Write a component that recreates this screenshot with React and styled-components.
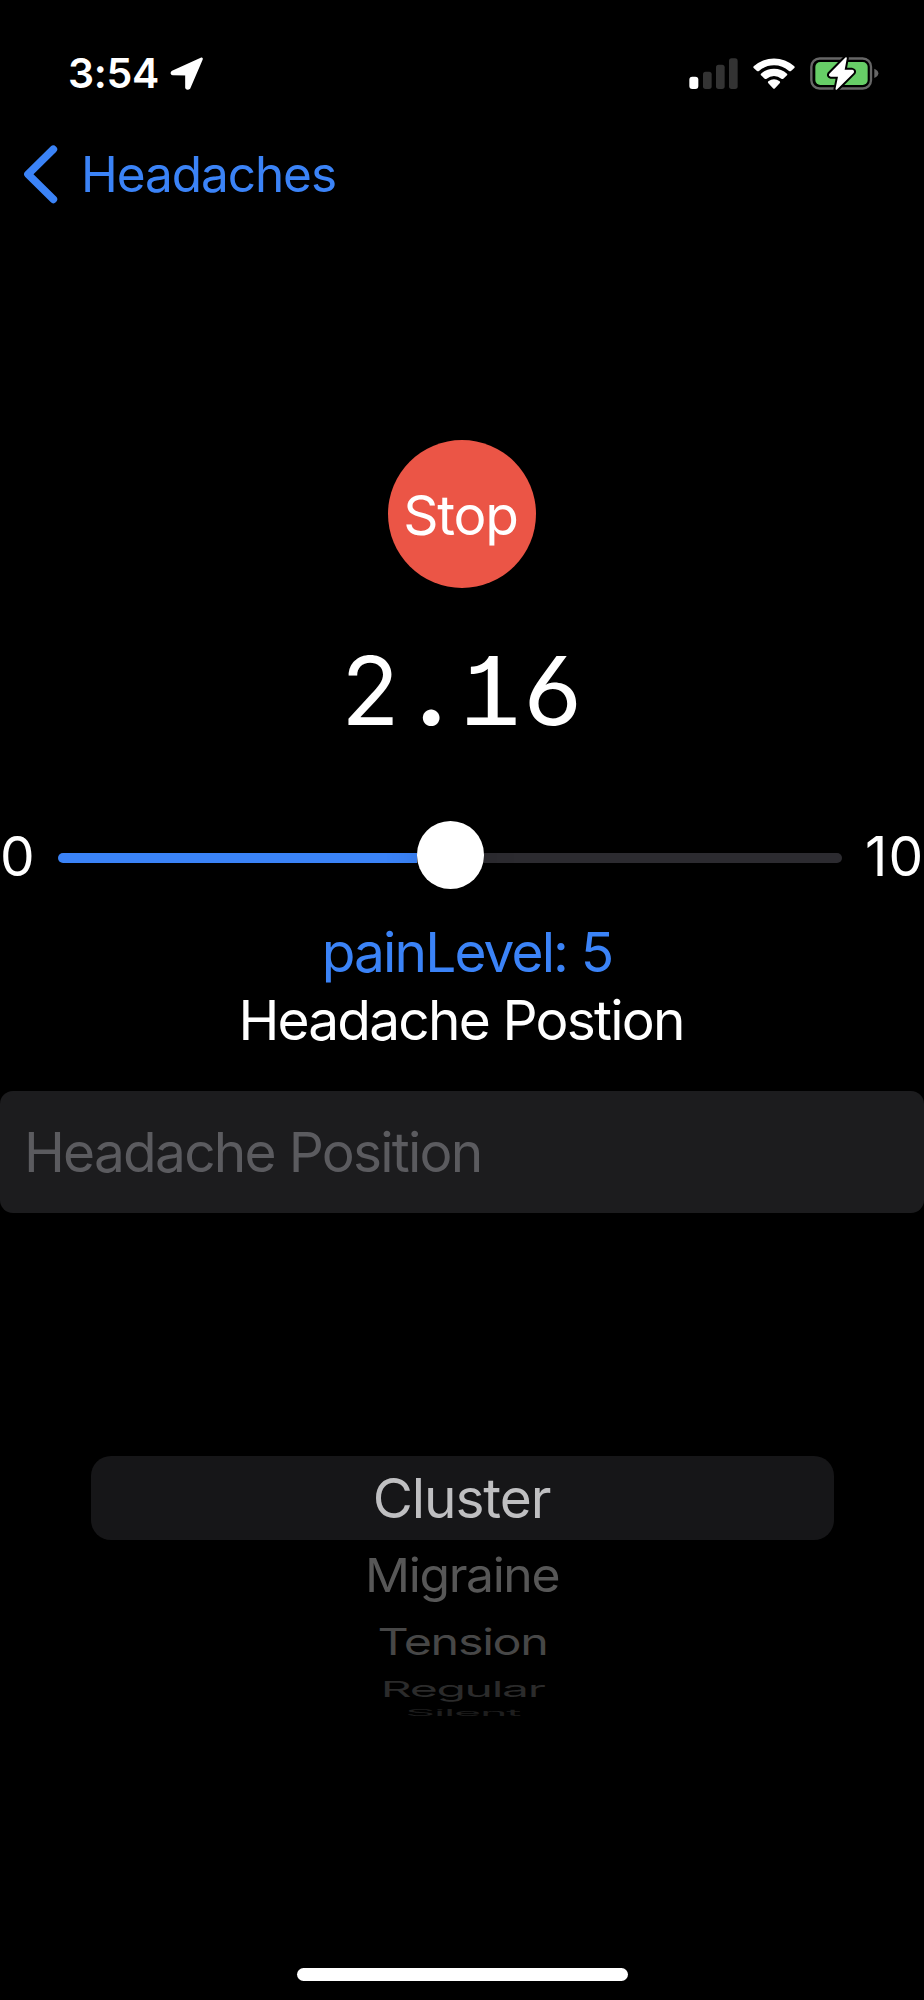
import React from "react";
import styled, { createGlobalStyle } from "styled-components";

const GlobalStyle = createGlobalStyle`
  * { box-sizing: border-box; }
  body {
    margin: 0;
    background: #000;
    color: #fff;
    font-family: Inter, "Liberation Sans", sans-serif;
  }
`;

const Screen = styled.main`
  width: 924px;
  height: 2000px;
  display: flex;
  flex-direction: column;
  overflow: hidden;
  background: #000;
`;

const StatusBar = styled.header`
  height: 146px;
  padding: 0 45px 0 68px;
  display: flex;
  align-items: center;
`;

const Clock = styled.time`
  width: 102px;
  font-size: 41px;
  font-weight: 600;
  letter-spacing: -0.3px;
`;

const StatusIcons = styled.div`
  margin-left: auto;
  display: flex;
  align-items: center;
  gap: 14px;
`;

const Glyph = styled.svg`
  display: block;
  flex: none;
  width: ${(p) => p.$width}px;
  height: ${(p) => p.$height}px;
`;

const NavBar = styled.nav`
  height: 56px;
  padding-left: 22px;
  display: flex;
  align-items: center;
`;

const BackLink = styled.a`
  display: flex;
  align-items: center;
  gap: 21px;
  color: #3b83f7;
  font-size: 49.5px;
  line-height: 56px;
  letter-spacing: -1.07px;
`;

const StopButton = styled.button`
  width: 148px;
  height: 148px;
  margin: 238px auto 0;
  padding: 2px 3px 0 0;
  border: 0;
  border-radius: 50%;
  display: flex;
  align-items: center;
  justify-content: center;
  background: #eb5546;
  color: #fff;
  font: 400 55px/60px Inter, "Liberation Sans", sans-serif;
  letter-spacing: -1.24px;
`;

const Timer = styled.div`
  height: 204px;
  padding-top: 1px;
  display: flex;
  justify-content: center;
  align-items: center;
  font-size: 95px;
  line-height: 120px;
  font-feature-settings: "cv01", "cv03", "ss01", "tnum";
`;

const TimerCell = styled.span`
  width: 61px;
  padding-right: ${(p) => p.$nudge || 0}px;
  display: flex;
  justify-content: center;
  transform: scaleX(${(p) => p.$stretch || 1});
`;

const TimerPoint = styled(TimerCell)`
  font-size: 126px;
  padding-bottom: 24px;
`;

const SliderRow = styled.div`
  height: 128px;
  display: flex;
  align-items: center;
  font-size: 55px;
  line-height: 60px;
`;

const MinLabel = styled.span`
  width: 57.5px;
`;

const MaxLabel = styled.span`
  width: 82px;
  padding-left: 23px;
  letter-spacing: 1.2px;
`;

const Slider = styled.div`
  flex: 1;
  display: flex;
  align-items: center;
`;

const Track = styled.div`
  flex: ${(p) => (p.$filled ? "0 0 359px" : "1")};
  height: 10px;
  margin-top: 3px;
  border-radius: ${(p) => (p.$filled ? "5px 0 0 5px" : "0 5px 5px 0")};
  background: ${(p) => (p.$filled ? "#3b83f7" : "#2c2b30")};
`;

const Thumb = styled.div`
  flex: none;
  width: 67.5px;
  height: 67.5px;
  margin: -2px 0 0;
  border-radius: 50%;
  background: #fff;
  box-shadow: 0 1px 36px rgba(0, 0, 0, 0.14);
  z-index: 1;
`;

const Caption = styled.p`
  height: 68px;
  margin: 0;
  padding-right: 2px;
  font-size: 55px;
  line-height: 69px;
  text-align: center;
  letter-spacing: -1.8px;
  white-space: nowrap;
`;

const PainCaption = styled(Caption)`
  padding: 0 0 0 10px;
  margin-top: -2px;
  color: #3b83f7;
  letter-spacing: -1.87px;
`;

const PositionField = styled.div`
  height: 122px;
  margin-top: 37px;
  padding-left: 24px;
  border-radius: 13px;
  background: #1c1c1e;
  color: #5b5b5f;
  font-size: 55px;
  line-height: 123px;
  letter-spacing: -1.75px;
  white-space: nowrap;
`;

const Picker = styled.div`
  width: 743px;
  margin: 243px 0 0 91px;
  display: flex;
  flex-direction: column;
  text-align: center;
  font-size: 55px;
  letter-spacing: -1.1px;
`;

const SelectedOption = styled.div`
  height: 84px;
  padding-right: 2px;
  border-radius: 20px;
  background: #161618;
  color: #bfbfc1;
  line-height: 85px;
`;

const Option = styled.div`
  height: ${(p) => p.$height}px;
  padding-top: ${(p) => p.$drop || 0}px;
  display: flex;
  align-items: center;
  justify-content: center;
  overflow: hidden;
  color: ${(p) => p.$color};
  letter-spacing: -1.5px;
  line-height: 71px;

  span {
    flex: none;
    transform: scale(${(p) => p.$scaleX}, ${(p) => p.$scaleY});
  }
`;

const HomeIndicator = styled.div`
  width: 331px;
  height: 13px;
  margin: auto auto 19.5px 297px;
  border-radius: 7px;
  background: #fff;
`;

const LocationIcon = () => (
  <Glyph $width={34} $height={35} viewBox="510 48 102 105">
    <path
      d="M604 57 L518 96 Q514 100 519 101 L560 102 L560 143 Q563 147 567 143 Z"
      fill="#fff" stroke="#fff" strokeWidth="9" strokeLinejoin="round"
    />
  </Glyph>
);

const SignalIcon = () => (
  <Glyph $width={49} $height={33} viewBox="87 49 147 99">
    <rect x="88" y="108" width="27" height="37" rx="9" fill="#fff" />
    <rect x="129" y="93" width="26" height="52" rx="8" fill="#333" />
    <rect x="168" y="72" width="26" height="73" rx="8" fill="#333" />
    <rect x="207" y="53" width="26" height="92" rx="8" fill="#333" />
  </Glyph>
);

const WifiIcon = () => (
  <Glyph $width={44} $height={33} viewBox="276 49 132 99">
    <g fill="#fff">
      <path d="M281 77 A90 90 0 0 1 403 77 Q405 80 403 82 L393 91 Q390 93 387 91 A68 68 0 0 0 297 91 Q294 93 291 91 L281 82 Q279 80 281 77 Z" />
      <path d="M303 99 A58 58 0 0 1 381 99 Q383 102 381 104 L370 114 Q367 116 364 114 A35 35 0 0 0 320 114 Q317 116 314 114 L303 104 Q301 102 303 99 Z" />
      <path d="M325 122 A28 28 0 0 1 359 122 Q362 125 359 128 L345 143 Q342 146 339 143 L325 128 Q322 125 325 122 Z" />
    </g>
  </Glyph>
);

const BatteryIcon = () => (
  <Glyph $width={69} $height={35} viewBox="450 46 207 105">
    <rect x="454" y="53.5" width="179" height="90" rx="25" fill="none" stroke="#666" strokeWidth="7" />
    <rect x="466" y="64" width="157" height="69" rx="15" fill="#67ce67" />
    <path d="M643 84 Q655 89 655 98 Q655 107 643 112 Z" fill="#666" />
    <path
      d="M558 52 L510 101 Q508 105 513 106 L537 106 L529 145 L579 95 Q581 91 576 90 L551 90 Z"
      fill="#fff" stroke="#000" strokeWidth="17" strokeLinejoin="round"
    />
    <path
      d="M558 52 L510 101 Q508 105 513 106 L537 106 L529 145 L579 95 Q581 91 576 90 L551 90 Z"
      fill="#fff" stroke="#fff" strokeWidth="5" strokeLinejoin="round"
    />
  </Glyph>
);

const BackChevron = () => (
  <Glyph $width={38} $height={60} viewBox="66 312 114 180">
    <path d="M160 328 L84 403 L160 478" fill="none" stroke="#3b83f7" strokeWidth="23" strokeLinecap="round" strokeLinejoin="round" />
  </Glyph>
);

const options = [
  { label: "Migraine", height: 70, color: "#575757", scaleX: 0.906, scaleY: 0.85 },
  { label: "Tension", height: 63, color: "#474747", scaleX: 0.881, scaleY: 0.66, drop: 1 },
  { label: "Regular", height: 32, color: "#2b2b2b", scaleX: 0.875, scaleY: 0.4 },
  { label: "Silent", height: 11, color: "#1e1e1e", scaleX: 0.85, scaleY: 0.16, drop: 4 },
];

export default function App() {
  return (
    <Screen>
      <GlobalStyle />
      <StatusBar>
        <Clock>3:54</Clock>
        <LocationIcon />
        <StatusIcons>
          <SignalIcon />
          <WifiIcon />
          <BatteryIcon />
        </StatusIcons>
      </StatusBar>
      <NavBar>
        <BackLink>
          <BackChevron />
          Headaches
        </BackLink>
      </NavBar>
      <StopButton>Stop</StopButton>
      <Timer>
        <TimerCell>2</TimerCell>
        <TimerPoint $nudge={1}>.</TimerPoint>
        <TimerCell $stretch={1.13} $nudge={4}>1</TimerCell>
        <TimerCell $stretch={1.06} $nudge={1}>6</TimerCell>
      </Timer>
      <SliderRow>
        <MinLabel>0</MinLabel>
        <Slider>
          <Track $filled />
          <Thumb />
          <Track />
        </Slider>
        <MaxLabel>10</MaxLabel>
      </SliderRow>
      <PainCaption>painLevel: 5</PainCaption>
      <Caption>Headache Postion</Caption>
      <PositionField>Headache Position</PositionField>
      <Picker>
        <SelectedOption>Cluster</SelectedOption>
        {options.map((o) => (
          <Option key={o.label} $height={o.height} $color={o.color} $scaleX={o.scaleX} $scaleY={o.scaleY} $drop={o.drop}>
            <span>{o.label}</span>
          </Option>
        ))}
      </Picker>
      <HomeIndicator />
    </Screen>
  );
}
